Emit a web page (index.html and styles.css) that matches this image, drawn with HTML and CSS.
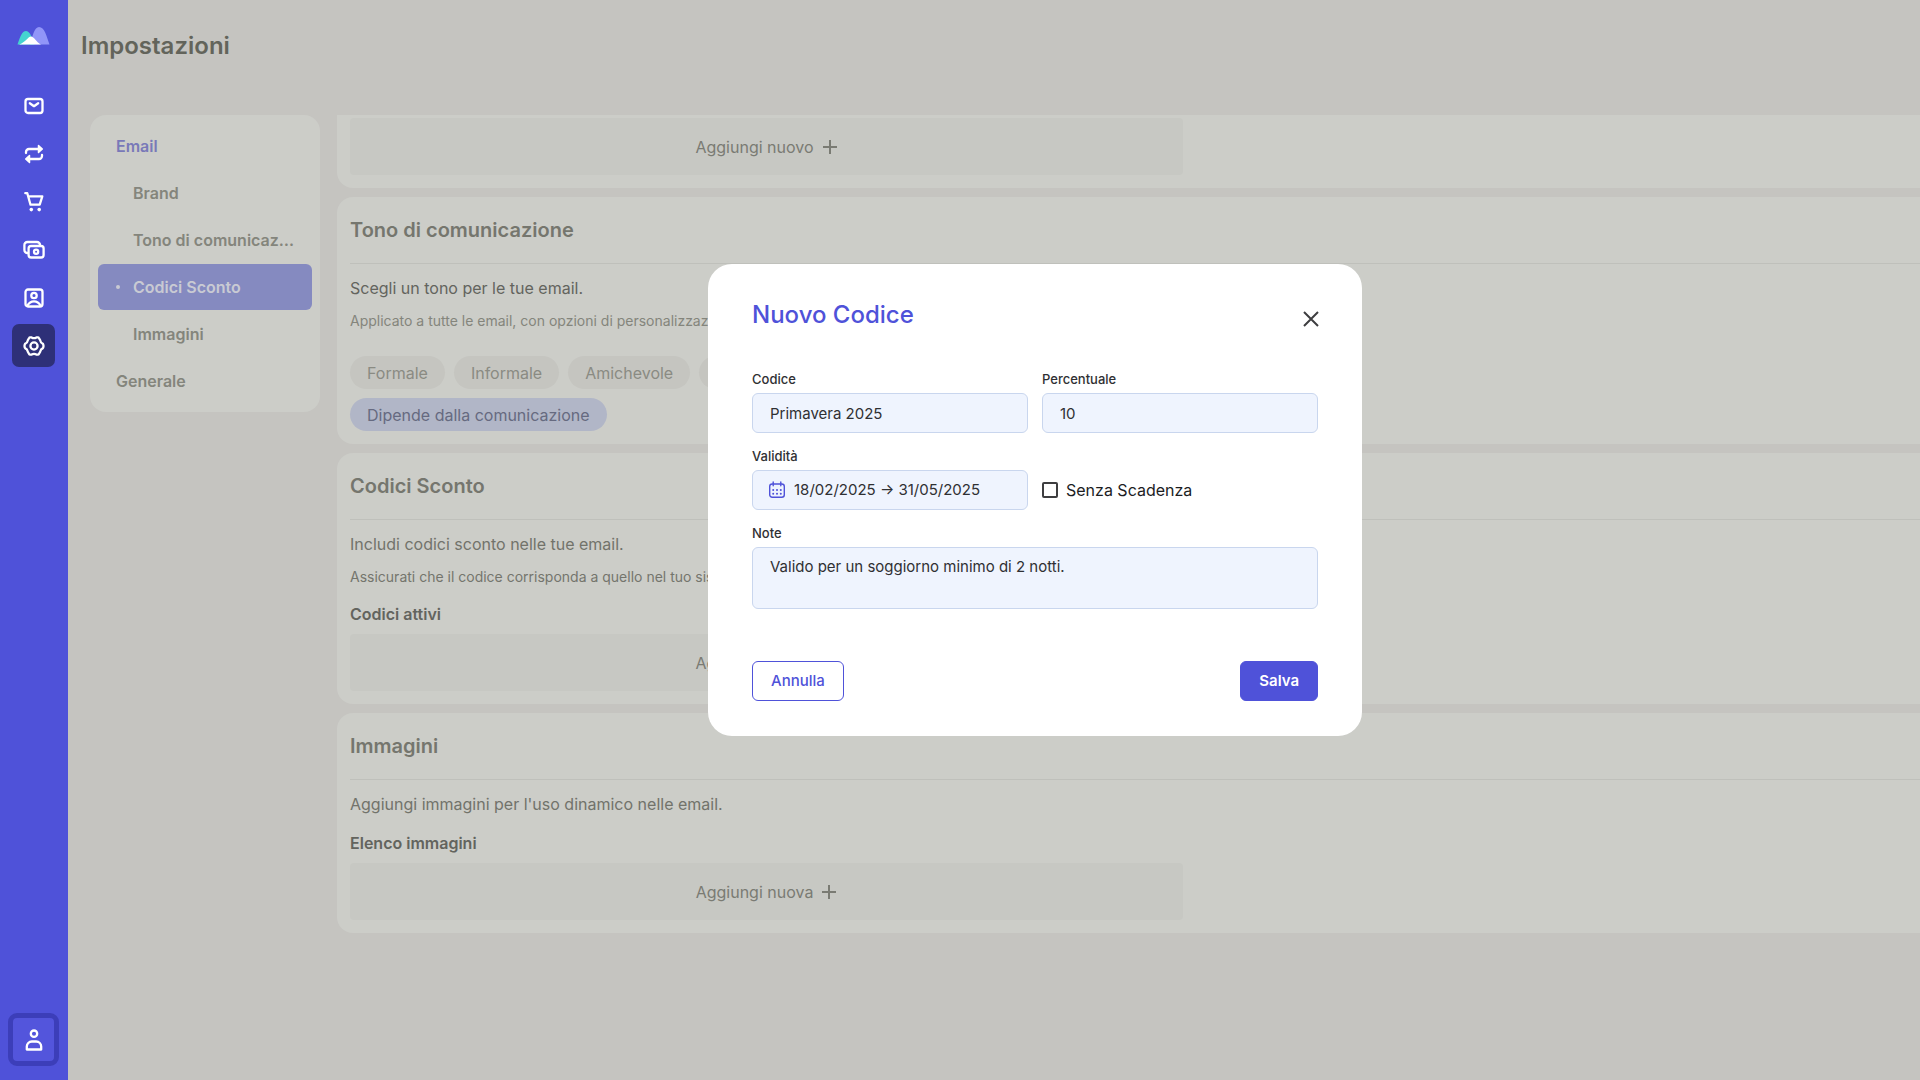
FILE: index.html
```html
<!DOCTYPE html>
<html lang="it">
<head>
<meta charset="utf-8">
<meta name="viewport" content="width=device-width, initial-scale=1">
<title>Impostazioni</title>
<link rel="stylesheet" href="styles.css">
</head>
<body>
<div class="app">
  <aside class="sidebar">
    <a class="logo" href="#" aria-label="Home">
      <svg width="34" height="20" viewBox="0 0 34 20">
        <path d="M13 18.500C15.500 10 17.500 1 22 1C27.500 1 29.500 10 32.500 18.500Z" fill="#9195f8"/>
        <path d="M.500 18.500C3 11 5 5 9 5C12.500 5 14.500 10 17.500 18.500Z" fill="#45d3d0"/>
        <path d="M2 18.500C8 17 11 10.500 14 10.500C17 10.500 19 16 24 18.500Z" fill="#fff"/>
      </svg>
    </a>
    <nav class="rail" aria-label="Principale">
      <a class="rail-item" href="#" aria-label="Email">
        <svg class="icon" viewBox="0 0 22 22"><rect x="2.500" y="4" width="17" height="14" rx="2.500"/><path d="M6.800 8.200l4.200 3 4.200-3"/></svg>
      </a>
      <a class="rail-item" href="#" aria-label="Automazioni">
        <svg class="icon" viewBox="0 0 22 22"><path d="M3 10V9a3 3 0 0 1 3-3h12M19 12v1a3 3 0 0 1-3 3H4"/><path d="M15.500 2.500L19.300 6l-3.800 3.500zM6.500 12.500L2.700 16l3.800 3.500z" fill="currentColor" stroke-width="1.500"/></svg>
      </a>
      <a class="rail-item" href="#" aria-label="Carrello">
        <svg class="icon" viewBox="0 0 22 22"><path d="M2.300 2.200h2L7.500 13.700h9.200l2.600-8.300H5.300"/><circle cx="8.300" cy="18.600" r="1.800" fill="currentColor" stroke="none"/><circle cx="16.200" cy="18.600" r="1.800" fill="currentColor" stroke="none"/></svg>
      </a>
      <a class="rail-item" href="#" aria-label="Pagamenti">
        <svg class="icon" viewBox="0 0 22 22"><rect x="5.600" y="7" width="15" height="11.500" rx="2.500"/><path d="M4.500 14A3 3 0 0 1 1.400 11V6a3 3 0 0 1 3-3H14a3 3 0 0 1 3 3"/><circle cx="13.100" cy="12.700" r="2.100"/></svg>
      </a>
      <a class="rail-item" href="#" aria-label="Contatti">
        <svg class="icon" viewBox="0 0 22 22"><rect x="2.500" y="2.500" width="17" height="17" rx="2.500"/><circle cx="11" cy="8.500" r="2.700"/><path d="M4.500 18.500c1.500-2.900 3.800-4.200 6.500-4.200s5 1.300 6.500 4.200"/></svg>
      </a>
      <a class="rail-item rail-item-active" href="#" aria-label="Impostazioni" aria-current="page">
        <svg class="icon" viewBox="0 0 22 22"><path d="M8.600 2.400q2.400 1.500 4.800 0h1.500q.7 0 1 .6l1.300 2.300q.4 2.600 2.800 3.600 1 2.100 0 4.200-2.400 1-2.800 3.600l-1.300 2.300q-.3.600-1 .6h-1.500q-2.400-1.500-4.800 0H7.100q-.7 0-1-.6l-1.300-2.300Q4.400 14.100 2 13.100q-1-2.100 0-4.200 2.400-1 2.800-3.600L6.100 3q.3-.6 1-.6z"/><circle cx="11" cy="11" r="3.600"/></svg>
      </a>
    </nav>
    <button class="profile" type="button" aria-label="Profilo">
      <svg class="icon" viewBox="0 0 22 22"><circle cx="11" cy="4.700" r="3.200"/><path d="M3.800 20.500v-3a5 5 0 0 1 5-5h4.400a5 5 0 0 1 5 5v3z"/></svg>
    </button>
  </aside>

  <main class="page">
    <h1 class="page-title">Impostazioni</h1>
    <div class="settings">
      <nav class="menu" aria-label="Sezioni">
        <a class="menu-item menu-item-open" href="#">Email</a>
        <a class="menu-item menu-sub" href="#">Brand</a>
        <a class="menu-item menu-sub" href="#">Tono di comunicazione</a>
        <a class="menu-item menu-sub menu-sub-active" href="#" aria-current="true">Codici Sconto</a>
        <a class="menu-item menu-sub" href="#">Immagini</a>
        <a class="menu-item" href="#">Generale</a>
      </nav>

      <div class="sections">
        <section class="card card-scrolled">
          <button class="add" type="button">Aggiungi nuovo
            <svg class="plus" viewBox="0 0 16 16"><path d="M8 1v14M1 8h14"/></svg>
          </button>
        </section>

        <section class="card">
          <h2 class="card-title">Tono di comunicazione</h2>
          <p class="lead">Scegli un tono per le tue email.</p>
          <p class="hint hint-light">Applicato a tutte le email, con opzioni di personalizzazione.</p>
          <div class="chips">
            <button class="chip" type="button">Formale</button>
            <button class="chip" type="button">Informale</button>
            <button class="chip" type="button">Amichevole</button>
            <button class="chip" type="button">Tecnico</button>
            <button class="chip chip-active" type="button">Dipende dalla comunicazione</button>
          </div>
        </section>

        <section class="card">
          <h2 class="card-title">Codici Sconto</h2>
          <p class="lead lead-light">Includi codici sconto nelle tue email.</p>
          <p class="hint">Assicurati che il codice corrisponda a quello nel tuo sistema.</p>
          <h3 class="list-title">Codici attivi</h3>
          <button class="add" type="button">Aggiungi nuovo
            <svg class="plus" viewBox="0 0 16 16"><path d="M8 1v14M1 8h14"/></svg>
          </button>
        </section>

        <section class="card">
          <h2 class="card-title">Immagini</h2>
          <p class="lead lead-light">Aggiungi immagini per l'uso dinamico nelle email.</p>
          <h3 class="list-title">Elenco immagini</h3>
          <button class="add" type="button">Aggiungi nuova
            <svg class="plus" viewBox="0 0 16 16"><path d="M8 1v14M1 8h14"/></svg>
          </button>
        </section>
      </div>
    </div>
  </main>
</div>

<div class="overlay">
  <form class="dialog" role="dialog" aria-modal="true" aria-labelledby="dialog-title">
    <header class="dialog-head">
      <h2 class="dialog-title" id="dialog-title">Nuovo Codice</h2>
      <button class="close" type="button" aria-label="Chiudi">
        <svg width="18" height="18" viewBox="0 0 18 18"><path d="M2 2l14 14M16 2L2 16"/></svg>
      </button>
    </header>
    <div class="fields">
      <div class="field">
        <label class="label" for="code">Codice</label>
        <input class="input" id="code" type="text" value="Primavera 2025">
      </div>
      <div class="field">
        <label class="label" for="percent">Percentuale</label>
        <input class="input" id="percent" type="text" inputmode="numeric" value="10">
      </div>
      <div class="field">
        <label class="label" for="validity">Validità</label>
        <div class="date">
          <svg class="calendar" viewBox="0 0 18 18"><rect x="1.700" y="3" width="14.600" height="13.200" rx="2.500"/><path d="M5.200 1v3.800M12.800 1v3.800"/><path class="dots" d="M5.200 9h.01M9 9h.01M12.800 9h.01M5.200 12.700h.01M9 12.700h.01M12.800 12.700h.01"/></svg>
          <input class="date-input" id="validity" type="text" value="18/02/2025 → 31/05/2025">
        </div>
      </div>
      <label class="check">
        <input class="check-box" type="checkbox">
        Senza Scadenza
      </label>
      <div class="field field-wide">
        <label class="label" for="notes">Note</label>
        <textarea class="input textarea" id="notes">Valido per un soggiorno minimo di 2 notti.</textarea>
      </div>
    </div>
    <footer class="dialog-foot">
      <button class="button" type="button">Annulla</button>
      <button class="button button-primary" type="submit">Salva</button>
    </footer>
  </form>
</div>
</body>
</html>
```
FILE: styles.css
```css
:root {
  --brand: #4f52d9;
  --page: #c5c4c0;
  --card: #cccdc8;
  --well: #c7c8c3;
  --line: #bfc0bb;
  --muted: #84857c;
}

* {
  box-sizing: border-box;
}

body {
  margin: 0;
  background: var(--page);
  color: #63645e;
  font: 400 16px/20px Inter, "Liberation Sans", sans-serif;
}

h1, h2, h3, p {
  margin: 0;
}

a {
  color: inherit;
  text-decoration: none;
}

button, input, textarea {
  font: inherit;
  color: inherit;
}

button {
  border: 0;
  padding: 0;
  cursor: pointer;
}

.app {
  display: flex;
  height: 100vh;
  overflow: hidden;
}

/* Left rail */
.sidebar {
  flex: none;
  width: 68px;
  padding: 26px 9px 14px 8px;
  display: flex;
  flex-direction: column;
  align-items: center;
  background: var(--brand);
  color: #fff;
}

.logo {
  height: 20px;
  margin-bottom: 38px;
}

.logo svg {
  display: block;
}

.rail {
  display: flex;
  flex-direction: column;
  gap: 5px;
}

.rail-item {
  display: grid;
  place-items: center;
  width: 43px;
  height: 43px;
  border-radius: 7px;
}

.rail-item-active {
  background: #2e3078;
}

.icon {
  width: 22px;
  height: 22px;
  fill: none;
  stroke: currentColor;
  stroke-width: 2.300;
  stroke-linecap: round;
  stroke-linejoin: round;
}

.profile {
  margin-top: auto;
  display: grid;
  place-items: center;
  width: 51px;
  height: 53px;
  border: 5px solid #3c3eb9;
  border-radius: 9px;
  background: #5355dc;
}

/* Page */
.page {
  flex: 1;
  min-width: 0;
  padding: 30px 0 0 13px;
}

.page-title {
  margin-bottom: 53px;
  color: #63645b;
  font-size: 24px;
  font-weight: 600;
  line-height: 32px;
}

.settings {
  display: flex;
  align-items: flex-start;
  gap: 17px;
  padding-left: 9px;
}

.menu {
  flex: none;
  width: 230px;
  padding: 8px;
  display: flex;
  flex-direction: column;
  gap: 1px;
  border-radius: 16px;
  background: var(--card);
}

.menu-item {
  padding: 0 16px 0 18px;
  overflow: hidden;
  color: var(--muted);
  font-weight: 600;
  line-height: 46px;
  text-overflow: ellipsis;
  white-space: nowrap;
}

.menu-sub {
  padding-left: 35px;
}

.menu-item-open {
  color: #7979b8;
}

.menu-sub-active {
  display: flex;
  align-items: center;
  gap: 13px;
  padding-left: 18px;
  border-radius: 6px;
  background: #858ac0;
  color: #c9cad3;
}

.menu-sub-active::before {
  content: "";
  width: 4px;
  height: 4px;
  border-radius: 50%;
  background: #c9cad3;
}

.sections {
  flex: 1;
  min-width: 0;
  display: flex;
  flex-direction: column;
  gap: 9px;
}

.card {
  padding: 21px 0 13px 13px;
  border-radius: 16px 0 0 16px;
  background: var(--card);
}

.card-scrolled {
  padding-top: 3px;
  border-top-left-radius: 0;
}

.card-title {
  padding-bottom: 21px;
  border-bottom: 1px solid var(--line);
  color: #75766e;
  font-size: 20px;
  font-weight: 600;
  line-height: 24px;
}

.lead {
  margin-top: 14px;
}

.lead-light {
  color: #72736b;
}

.hint {
  margin-top: 15px;
  color: #74756d;
  font-size: 14px;
  line-height: 16px;
}

.hint-light {
  color: var(--muted);
}

.list-title {
  margin-top: 19px;
  margin-bottom: 10px;
  font-size: 16px;
  font-weight: 600;
}

.add {
  display: flex;
  align-items: center;
  justify-content: center;
  gap: 8px;
  width: 833px;
  max-width: 100%;
  height: 57px;
  border-radius: 4px;
  background: var(--well);
  color: #7a7b73;
}

.plus {
  width: 16px;
  height: 16px;
  fill: none;
  stroke: currentColor;
  stroke-width: 2;
}

.chips {
  display: flex;
  flex-wrap: wrap;
  gap: 9px;
  max-width: 540px;
  margin-top: 27px;
}

.chip {
  height: 33px;
  padding: 0 17px;
  border-radius: 17px;
  background: #c5c5c0;
  color: #8a8b83;
}

.chip-active {
  background: #b1b6c7;
  color: #666a80;
}

/* Dialog */
.overlay {
  position: fixed;
  inset: 0;
  display: grid;
  place-items: center;
  padding: 0 0 80px 150px;
}

.dialog {
  width: 654px;
  padding: 35px 44px;
  border-radius: 24px;
  background: #fff;
  color: #2f3033;
  font-size: 15px;
}

.dialog-head {
  display: flex;
  align-items: flex-start;
  justify-content: space-between;
  margin-bottom: 32px;
}

.dialog-title {
  color: var(--brand);
  font-size: 24px;
  font-weight: 500;
  line-height: 32px;
}

.close {
  display: grid;
  place-items: center;
  width: 40px;
  height: 40px;
  margin-right: -13px;
  background: none;
}

.close svg {
  fill: none;
  stroke: #3e3e40;
  stroke-width: 2;
}

.fields {
  display: grid;
  grid-template-columns: repeat(2, minmax(0, 1fr));
  gap: 15px 14px;
}

.field {
  display: flex;
  flex-direction: column;
  gap: 5px;
}

.field-wide {
  grid-column: 1 / -1;
}

.label {
  font-size: 13px;
  font-weight: 500;
  line-height: 17px;
}

.input,
.date {
  width: 100%;
  height: 40px;
  padding: 0 17px;
  border: 1px solid #c9d6ee;
  border-radius: 6px;
  background: #eff4fe;
}

.textarea {
  height: 62px;
  padding-top: 9px;
  resize: none;
}

.date {
  display: flex;
  align-items: center;
  gap: 8px;
  padding-left: 15px;
}

.calendar {
  flex: none;
  width: 18px;
  height: 18px;
  fill: none;
  stroke: var(--brand);
  stroke-width: 1.400;
  stroke-linecap: round;
}

.dots {
  stroke-width: 2;
}

.date-input {
  flex: 1;
  min-width: 0;
  padding: 0;
  border: 0;
  background: none;
}

.check {
  align-self: end;
  display: flex;
  align-items: center;
  gap: 8px;
  height: 40px;
  color: #1c1d1f;
  font-size: 16px;
}

.check-box {
  appearance: none;
  width: 16px;
  height: 16px;
  margin: 0;
  border: 2px solid #3e3e40;
  border-radius: 2px;
}

.check-box:checked {
  background: var(--brand);
}

.dialog-foot {
  display: flex;
  justify-content: space-between;
  margin-top: 52px;
}

.button {
  height: 40px;
  padding: 0 18px;
  border: 1px solid var(--brand);
  border-radius: 6px;
  background: #fff;
  color: var(--brand);
  font-weight: 500;
}

.button-primary {
  background: var(--brand);
  color: #fff;
  font-weight: 600;
}
```
